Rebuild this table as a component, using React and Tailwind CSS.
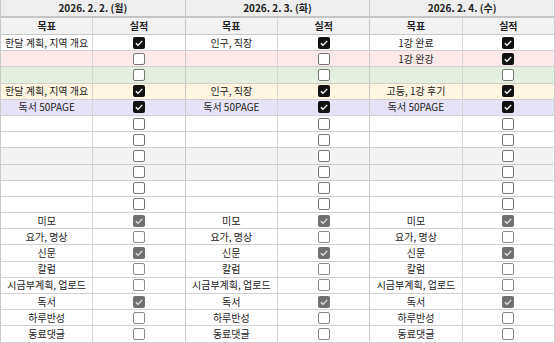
import React from 'react';

const ROW_BG = {
  white: 'bg-white',
  pink: 'bg-[#fde9e9]',
  green: 'bg-[#e4eede]',
  yellow: 'bg-[#fff5e0]',
  purple: 'bg-[#e6e3f6]',
  gray: 'bg-[#f3f3f3]',
};

const rowColors = [
  'white', 'pink', 'green', 'yellow', 'purple',
  'white', 'white', 'gray', 'gray', 'white', 'white',
  'white', 'white', 'white', 'white', 'white', 'white', 'white', 'white',
];

const routine = [
  ['미모', 'soft'],
  ['요가, 명상', 'off'],
  ['신문', 'soft'],
  ['칼럼', 'off'],
  ['시금부계획, 업로드', 'off'],
  ['독서', 'soft'],
  ['하루반성', 'off'],
  ['동료댓글', 'off'],
];

const blanks = Array.from({ length: 6 }, () => ['', 'empty']);

const days = [
  {
    label: '2026. 2. 2. (월)',
    rows: [
      ['한달 계획, 지역 개요', 'on'],
      ['', 'empty'],
      ['', 'empty'],
      ['한달 계획, 지역 개요', 'on'],
      ['독서 50PAGE', 'on'],
      ...blanks,
      ...routine,
    ],
  },
  {
    label: '2026. 2. 3. (화)',
    rows: [
      ['인구, 직장', 'on'],
      ['', 'empty'],
      ['', 'empty'],
      ['인구, 직장', 'on'],
      ['독서 50PAGE', 'on'],
      ...blanks,
      ...routine,
    ],
  },
  {
    label: '2026. 2. 4. (수)',
    rows: [
      ['1강 완료', 'on'],
      ['1강 완강', 'on'],
      ['', 'empty'],
      ['고등, 1강 후기', 'on'],
      ['독서 50PAGE', 'on'],
      ...blanks,
      ...routine,
    ],
  },
];

function Check({ state }) {
  if (state === 'on' || state === 'soft') {
    const bg = state === 'on' ? 'bg-[#111111]' : 'bg-[#707070]';
    return (
      <span className={`flex h-[12px] w-[12px] items-center justify-center rounded-[2px] ${bg}`}>
        <svg viewBox="0 0 12 12" className="h-[10px] w-[10px]">
          <path d="M2.2 6.2 L4.8 8.8 L9.9 3.4" fill="none" stroke={state === 'on' ? '#ffffff' : '#e2e2e2'} strokeWidth="1.6" />
        </svg>
      </span>
    );
  }
  const border = state === 'off' ? 'border-[#8a8a8a]' : 'border-[#767676]';
  return <span className={`block h-[12px] w-[12px] rounded-[2px] border bg-white ${border}`} />;
}

export default function App() {
  return (
    <div
      className="w-[555px] h-[343px] overflow-hidden bg-white text-[10px] text-[#222]"
      style={{ fontFamily: '"Noto Sans CJK KR", "Noto Sans", sans-serif' }}
    >
      <div className="grid grid-cols-3 border-l border-[#c9c9c9]">
        {days.map((day, di) => (
          <div key={di} className="flex flex-col">
            <div className="flex h-[18px] items-center justify-center border-b-2 border-r border-b-[#c4c4c4] border-r-[#c9c9c9] bg-[#eeeeee] font-bold leading-none">
              {day.label}
            </div>
            <div className="grid h-[17px] grid-cols-2 border-b border-[#c9c9c9] bg-[#f2f2f2] font-bold leading-none">
              <div className="flex items-center justify-center border-r border-[#d6d6d6]">목표</div>
              <div className="flex items-center justify-center border-r border-[#c9c9c9]">실적</div>
            </div>
            {day.rows.map(([text, state], ri) => (
              <div
                key={ri}
                className={`grid h-[16.2px] grid-cols-2 border-b border-[#d0d0d0] leading-none ${ROW_BG[rowColors[ri]]}`}
              >
                <div className="flex items-center justify-center whitespace-nowrap border-r border-[#d6d6d6]">
                  {text}
                </div>
                <div className="flex items-center justify-center border-r border-[#c9c9c9]">
                  <Check state={state} />
                </div>
              </div>
            ))}
          </div>
        ))}
      </div>
    </div>
  );
}
